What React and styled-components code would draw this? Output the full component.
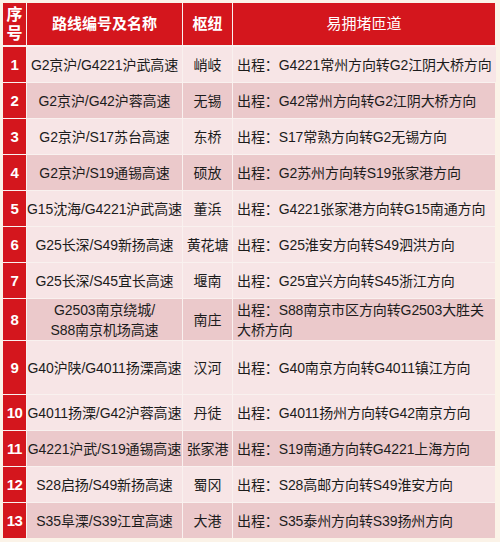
import React from "react";
import styled, { createGlobalStyle } from "styled-components";

const RED = "#d4161d";
const LINE = "#f9f1ef";
const LIGHT_ROW = "#f7e5e6";
const DARK_ROW = "#ebc9cb";

const GlobalStyle = createGlobalStyle`
  html, body {
    margin: 0;
    padding: 0;
    background: #fbf3e8;
  }
  body {
    font-family: "Liberation Sans", "Noto Sans CJK SC", sans-serif;
    color: #1c1c1c;
  }
`;

const Page = styled.div`
  width: 500px;
  height: 542px;
  padding: 3px 5px 3px 3px;
  box-sizing: border-box;
`;

const Table = styled.div`
  display: flex;
  flex-direction: column;
  gap: 1px;
  background: ${LINE};
`;

const Row = styled.div`
  display: grid;
  grid-template-columns: 23px 155px 49px 1fr;
  column-gap: 1px;
  height: ${props => props.height || 35}px;
  margin-bottom: ${props => (props.header ? 1 : 0)}px;
`;

const Cell = styled.div`
  display: flex;
  align-items: center;
  justify-content: ${props => (props.left ? "flex-start" : "center")};
  text-align: ${props => (props.left ? "left" : "center")};
  padding: ${props => (props.left ? "0 4px" : "0")};
  background: ${props => (props.dark ? DARK_ROW : LIGHT_ROW)};
  font-size: 14px;
  line-height: 20px;
  white-space: nowrap;
  letter-spacing: -0.1px;
`;

const HeadCell = styled.div`
  display: flex;
  align-items: center;
  justify-content: center;
  text-align: center;
  background: ${RED};
  color: #fff;
  font-size: ${props => props.size || 15}px;
  font-weight: ${props => (props.light ? 400 : 700)};
  line-height: ${props => props.lh || 20}px;
`;

const Num = styled.div`
  display: flex;
  align-items: center;
  justify-content: center;
  background: ${RED};
  color: #fff;
  font-size: 15px;
  font-weight: 700;
  letter-spacing: -0.5px;
`;

const rows = [
  ["G2京沪/G4221沪武高速", "峭岐", "出程：G4221常州方向转G2江阴大桥方向"],
  ["G2京沪/G42沪蓉高速", "无锡", "出程：G42常州方向转G2江阴大桥方向", true],
  ["G2京沪/S17苏台高速", "东桥", "出程：S17常熟方向转G2无锡方向"],
  ["G2京沪/S19通锡高速", "硕放", "出程：G2苏州方向转S19张家港方向", true],
  ["G15沈海/G4221沪武高速", "董浜", "出程：G4221张家港方向转G15南通方向"],
  ["G25长深/S49新扬高速", "黄花塘", "出程：G25淮安方向转S49泗洪方向"],
  ["G25长深/S45宜长高速", "堰南", "出程：G25宜兴方向转S45浙江方向"],
  [
    ["G2503南京绕城/", "S88南京机场高速"],
    "南庄",
    ["出程：S88南京市区方向转G2503大胜关", "大桥方向"],
    true,
    41
  ],
  ["G40沪陕/G4011扬溧高速", "汉河", "出程：G40南京方向转G4011镇江方向", false, 53],
  ["G4011扬溧/G42沪蓉高速", "丹徒", "出程：G4011扬州方向转G42南京方向"],
  ["G4221沪武/S19通锡高速", "张家港", "出程：S19南通方向转G4221上海方向", true],
  ["S28启扬/S49新扬高速", "蜀冈", "出程：S28高邮方向转S49淮安方向"],
  ["S35阜溧/S39江宜高速", "大港", "出程：S35泰州方向转S39扬州方向", true]
];

const lines = text =>
  Array.isArray(text)
    ? text.map((t, i) => (
        <React.Fragment key={i}>
          {i > 0 && <br />}
          {t}
        </React.Fragment>
      ))
    : text;

export default function App() {
  return (
    <Page>
      <GlobalStyle />
      <Table>
        <Row height={42} header>
          <HeadCell size={16} lh={19}>
            序<br />号
          </HeadCell>
          <HeadCell>路线编号及名称</HeadCell>
          <HeadCell>枢纽</HeadCell>
          <HeadCell light>易拥堵匝道</HeadCell>
        </Row>
        {rows.map(([route, hub, ramp, dark, height], i) => (
          <Row key={i} height={height}>
            <Num>{i + 1}</Num>
            <Cell dark={dark}>
              <span>{lines(route)}</span>
            </Cell>
            <Cell dark={dark}>{hub}</Cell>
            <Cell dark={dark} left>
              <span>{lines(ramp)}</span>
            </Cell>
          </Row>
        ))}
      </Table>
    </Page>
  );
}
